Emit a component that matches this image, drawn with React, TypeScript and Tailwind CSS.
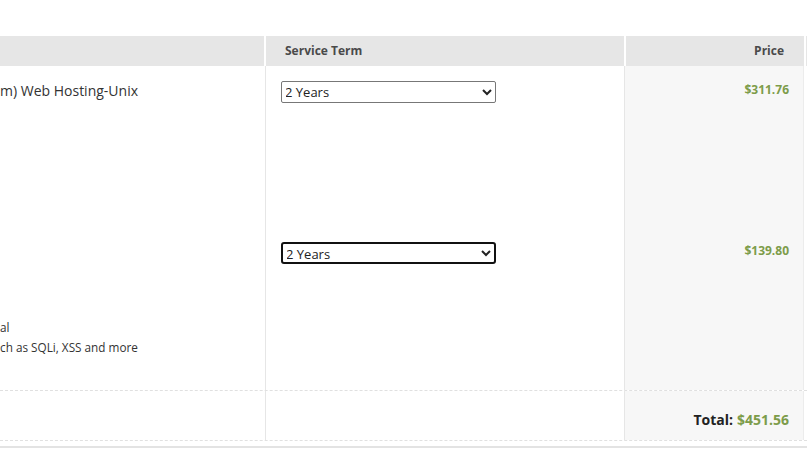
import React from 'react';

const Cell = ({ className = '', children }: { className?: string; children?: React.ReactNode }) => (
    <div className={className}>{children}</div>
);

function TermSelect({ focused }: { focused?: boolean }) {
    return (
        <select
            defaultValue="2"
            className={
                'w-[215px] h-[22px] text-[13px] leading-[18px] text-[#222] bg-white ' +
                (focused ? 'border-2 border-[#111] rounded-[3px] -indent-[1px]' : 'border border-[#777] rounded-[2px] -indent-[1px]')
            }
        >
            <option value="1">1 Year</option>
            <option value="2">2 Years</option>
            <option value="3">3 Years</option>
        </select>
    );
}

export default function App() {
    return (
        <div className="w-[807px] h-[456px] overflow-hidden bg-white pt-[36px] font-['Open_Sans',sans-serif]">
            {/* Cabecera */}
            <div className="flex h-[30px] bg-[#e6e6e6] text-[12px] font-bold text-[#4a4a4a]">
                <Cell className="w-[266px] border-r-2 border-white" />
                <Cell className="w-[360px] border-r-2 border-white pl-[19px] flex items-center">Service Term</Cell>
                <Cell className="w-[180px] border-r-2 border-white pr-[20px] flex items-center justify-end">Price</Cell>
                <Cell className="flex-1" />
            </div>

            {/* Fila 1 */}
            <div className="flex h-[161px]">
                <Cell className="w-[266px] border-r border-[#e6e6e6] pt-[15px] text-[14px] leading-[20px] text-[#333] whitespace-nowrap">
                    m) Web Hosting-Unix
                </Cell>
                <Cell className="w-[359px] border-r border-[#e6e6e6] pt-[15px] pl-[15px] flex items-start">
                    <TermSelect />
                </Cell>
                <Cell className="w-[179px] bg-[#f7f7f7] border-r border-[#ececec] pt-[15px] pr-[14px] text-right text-[12px] font-bold leading-[18px] text-[#7d9c4a]">
                    $311.76
                </Cell>
                <Cell className="flex-1" />
            </div>

            {/* Fila 2 */}
            <div className="flex h-[163px]">
                <Cell className="w-[266px] border-r border-[#e6e6e6] pt-[90px] text-[11.75px] leading-[20px] text-[#333] whitespace-nowrap">
                    <div>al</div>
                    <div>ch as SQLi, XSS and more</div>
                </Cell>
                <Cell className="w-[359px] border-r border-[#e6e6e6] pt-[15px] pl-[15px] flex items-start">
                    <TermSelect focused />
                </Cell>
                <Cell className="w-[179px] bg-[#f7f7f7] border-r border-[#ececec] pt-[15px] pr-[14px] text-right text-[12px] font-bold leading-[18px] text-[#7d9c4a]">
                    $139.80
                </Cell>
                <Cell className="flex-1" />
            </div>

            {/* Total */}
            <div className="flex h-[51px] border-y border-dashed border-[#e0e0e0]">
                <Cell className="w-[266px] border-r border-[#e6e6e6]" />
                <Cell className="w-[359px] border-r border-[#e6e6e6]" />
                <Cell className="w-[179px] bg-[#f7f7f7] border-r border-[#ececec] pr-[14px] pb-[10px] flex items-end justify-end text-[14px] font-bold leading-[20px]">
                    <span className="text-[#222]">Total:</span>
                    <span className="ml-[4px] text-[#7d9c4a]">$451.56</span>
                </Cell>
                <Cell className="flex-1" />
            </div>

            <div className="mt-[5px] h-[2px] bg-[#e3e3e3]" />
        </div>
    );
}
